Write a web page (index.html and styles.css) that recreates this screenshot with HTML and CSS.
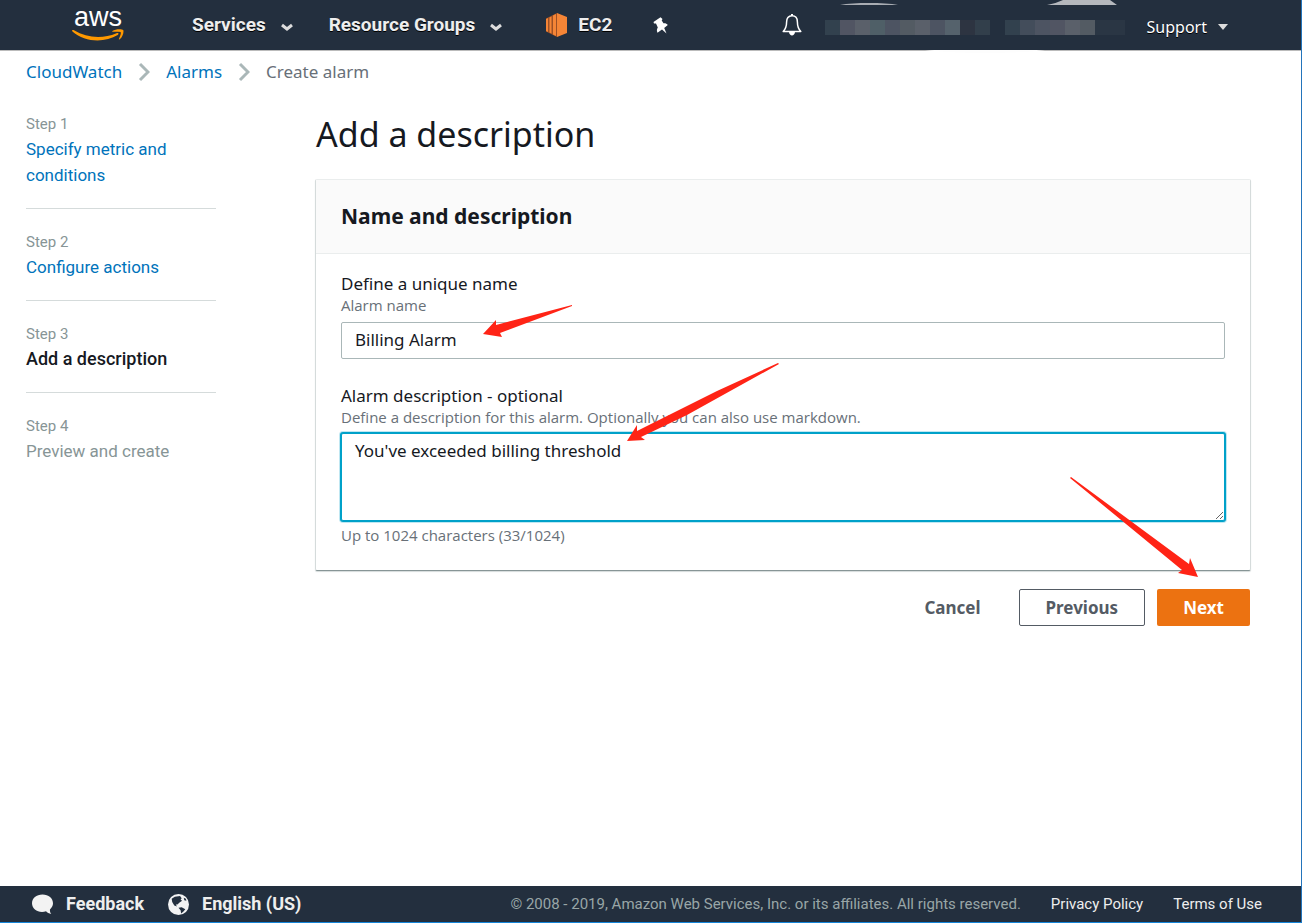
FILE: index.html
```html
<!DOCTYPE html>
<html lang="en">
<head>
<meta charset="utf-8">
<title>Create alarm - CloudWatch</title>
<link rel="stylesheet" href="styles.css">
</head>
<body>
<header class="topbar">
  <a class="logo" href="#" aria-label="aws home">
    <span class="logo-word">aws</span>
    <svg class="logo-smile" viewBox="0 0 52 13" aria-hidden="true">
      <path d="M0 1.500C.6.700 1.400.900 2 1.300c13 7.700 28.500 8.800 42.500 2.900 1.900-.8 2.800.8 1.200 1.800C32.800 14 12.500 13.300.7 2.700.2 2.300 0 1.900 0 1.500z"/>
      <path d="M40.500 1.900c3-2.200 9.600-2.200 10.700-.8.900 1.500-.4 7-3.500 9.200-.6.400-1 .1-.7-.5.900-2.100 2.300-5.500 1.700-6.500-.8-.9-4.800-.7-7.600-.5-.9.100-1.200-.4-.6-.9z"/>
    </svg>
  </a>
  <nav class="nav">
    <button class="nav-item nav-services" type="button">Services
      <svg class="chev" viewBox="0 0 12 8" aria-hidden="true"><path d="M1 2l5 4 5-4"/></svg>
    </button>
    <button class="nav-item nav-groups" type="button">Resource Groups
      <svg class="chev" viewBox="0 0 12 8" aria-hidden="true"><path d="M1 2l5 4 5-4"/></svg>
    </button>
    <a class="nav-item nav-ec2" href="#">
      <svg class="ec2" viewBox="0 0 22 24" aria-hidden="true">
        <path fill="#9d5025" d="M0 5.500L11 0v24L0 18.500z"/>
        <path fill="#f58536" d="M11 0l10 4v16l-10 4zM0 6l2-1v14l-2-1zM3.500 4.500l2-1v17l-2-1zM7 2.500l3-1.500v22l-3-1.500z"/>
      </svg>EC2
    </a>
    <button class="pin" type="button" aria-label="Pin shortcuts">
      <svg viewBox="0 0 15 17" aria-hidden="true"><path fill="#fff" d="M.5 5L7.500 .3 9.500 2l-.8 1.500L10.500 6.200c2-.2 3.300.4 4.300 1.800L11.200 11l2.300 5.500-4.500-4L4.500 15.800c-1-2-.7-3.800.3-5.300L3 6.500h-2z"/></svg>
    </button>
  </nav>
  <div class="account">
    <button class="bell" type="button" aria-label="Notifications">
      <svg viewBox="0 0 20 22" aria-hidden="true">
        <path fill="none" stroke="#fff" stroke-width="1.500" stroke-linejoin="round" d="M10 1.800c-3.700 0-5.400 2.700-5.400 6.200 0 5-1 7-3.400 9.500h17.600c-2.400-2.500-3.400-4.500-3.400-9.500 0-3.500-1.700-6.200-5.400-6.200z"/>
        <path fill="#fff" d="M9 0h2v2H9zM7 18h6c-.3 4.500-5.700 4.500-6 0z"/>
      </svg>
    </button>
    <span class="masked masked-user">
      <svg class="sliver sliver-user" viewBox="0 0 58 2" aria-hidden="true"><path fill="#a9adb3" d="M0 2c14-2.600 44-2.600 58 0z"/></svg>
      <svg class="sliver sliver-tab" viewBox="0 0 120 3" aria-hidden="true"><path fill="#fdfdfd" d="M0 0h120c-30 4-90 4-120 0z"/></svg>
      <i class="c1"></i><i class="c2"></i><i class="c3"></i><i class="c4"></i><i class="c5"></i><i class="c6"></i><i class="c3"></i><i class="c5"></i><i class="c7"></i><i class="c8"></i><i class="c9"></i>
    </span>
    <span class="masked masked-region">
      <svg class="sliver sliver-region" viewBox="0 0 70 5" aria-hidden="true"><path fill="#b5b8bd" d="M0 5c6-1 11-3 16-5h47l7 5z"/></svg>
      <i class="c1"></i><i class="c10"></i><i class="c5"></i><i class="c2"></i><i class="c3"></i><i class="c6"></i><i class="c11"></i><i class="c11"></i>
    </span>
    <button class="support" type="button">Support
      <svg viewBox="0 0 10 6" aria-hidden="true"><path fill="#ddd" d="M0 0h10L5 6z"/></svg>
    </button>
  </div>
</header>

<nav class="crumbs" aria-label="Breadcrumb">
  <a href="#">CloudWatch</a>
  <svg viewBox="0 0 12 20" aria-hidden="true"><path d="M2 2l8 8-8 8"/></svg>
  <a href="#">Alarms</a>
  <svg viewBox="0 0 12 20" aria-hidden="true"><path d="M2 2l8 8-8 8"/></svg>
  <span>Create alarm</span>
</nav>

<div class="layout">
  <ol class="steps">
    <li><small>Step 1</small><a href="#">Specify metric and conditions</a></li>
    <li><small>Step 2</small><a href="#">Configure actions</a></li>
    <li><small>Step 3</small><strong>Add a description</strong></li>
    <li><small>Step 4</small><span>Preview and create</span></li>
  </ol>
  <main>
    <h1>Add a description</h1>
    <form>
      <section class="panel">
        <h2>Name and description</h2>
        <div class="fields">
          <div class="field">
            <label for="name">Define a unique name</label>
            <p class="hint">Alarm name</p>
            <input id="name" type="text" value="Billing Alarm">
            <svg class="arrow arrow-name" viewBox="0 0 90 34" aria-hidden="true"><path d="M89 1v1L17 29l2 4L0 30 13 16v5z"/></svg>
          </div>
          <div class="field">
            <label for="desc">Alarm description - optional</label>
            <p class="hint">Define a description for this alarm. Optionally you can also use markdown.</p>
            <textarea id="desc" spellcheck="false">You've exceeded billing threshold</textarea>
            <p class="hint count">Up to 1024 characters (33/1024)</p>
            <svg class="arrow arrow-desc" viewBox="0 0 152 78" aria-hidden="true"><path d="M151 0l1 1L60 52 14 74l4 3-18 1L10 62v6L90 28z"/></svg>
          </div>
        </div>
      </section>
      <div class="actions">
        <button class="btn cancel" type="button">Cancel</button>
        <button class="btn previous" type="button">Previous</button>
        <button class="btn next" type="submit">Next</button>
        <svg class="arrow arrow-next" viewBox="0 0 128 101" aria-hidden="true"><path d="M0 1l1-1 118 87 1-6 8 19-20-4 4-3z"/></svg>
      </div>
    </form>
  </main>
</div>

<footer class="footer">
  <a class="foot-main" href="#">
    <svg viewBox="0 0 22 21" aria-hidden="true"><path fill="#f3f3f3" d="M11 0C4.500 0 0 4 0 9.300s4.700 9 10.500 9c1.500 0 2.900-.2 4.200-.6 1.300 1.500 3 2.500 5.500 2.800-1.200-1.500-1.500-3-1.400-4.800C20.800 14 22 11.800 22 9.300 22 4 17.500 0 11 0z"/></svg>Feedback
  </a>
  <button class="foot-main" type="button">
    <svg viewBox="0 0 20 20" aria-hidden="true"><circle cx="10" cy="10" r="10" fill="#f3f3f3"/><path fill="#232f3e" d="M3.500 4.500l3-2 5-.5 1.500 2-1 1.500 1.500 1-2.500 1.500L9 10l-1.500 0 1 2-2.500-1L4 7.500zM15 3.500l2 1 .5 2-2-.5zM10 13l3-.5 3.500 2-2 2.500-2 1.500-.5-3z"/></svg>English (US)
  </button>
  <div class="legal">
    <span>© 2008 - 2019, Amazon Web Services, Inc. or its affiliates. All rights reserved.</span>
    <a href="#">Privacy Policy</a>
    <a href="#">Terms of Use</a>
  </div>
</footer>
</body>
</html>
```
FILE: styles.css
```css
* { box-sizing: border-box; }
body {
  margin: 0;
  min-height: 100vh;
  display: flex;
  flex-direction: column;
  border-right: 1px solid #2374bb;
  border-bottom: 1px solid #1686d9;
  background: #fff;
  color: #16191f;
  font: 17px/22px "Noto Sans", sans-serif;
}
button { padding: 0; border: 0; background: none; color: inherit; font: inherit; cursor: pointer; }
a { color: #0073bb; text-decoration: none; }
svg { display: block; flex: none; }
h1, h2, p { margin: 0; }

.topbar {
  display: flex;
  align-items: center;
  height: 50px;
  padding-left: 72px;
  background: #232f3e;
  color: #fff;
  box-shadow: 0 1px 0 #bbb;
}
.logo { width: 52px; padding-bottom: 4px; color: #fff; }
.logo-word { display: block; font: 27px/24px "Liberation Sans", sans-serif; text-align: center; }
.logo-smile { width: 52px; height: 13px; fill: #f90; }
.nav { display: flex; align-items: center; margin-left: 68px; }
.nav-item {
  display: flex;
  align-items: center;
  color: #eee;
  font: 700 19px/24px Roboto, sans-serif;
  text-shadow: 0 1px 0 #000;
}
.nav-services { gap: 15px; }
.nav-groups { margin-left: 36px; gap: 15px; }
.nav-ec2 { margin-left: 44px; gap: 10px; }
.chev { width: 12px; height: 8px; fill: none; stroke: #ddd; stroke-width: 3; margin-top: 3px; }
.ec2 { width: 22px; height: 24px; }
.pin { margin-left: 41px; }
.pin svg { width: 15px; height: 17px; }
.account { display: flex; align-items: center; margin-left: auto; padding-right: 73px; }
.bell svg { width: 20px; height: 22px; }
.masked { position: relative; display: flex; height: 15px; margin-top: 5px; }
.masked-user { margin-left: 23px; }
.masked-region { margin-left: 15px; }
.masked i { width: 15px; height: 15px; }
.sliver { position: absolute; }
.sliver-user { left: 15px; top: -17px; width: 58px; height: 2px; }
.sliver-tab { left: 100px; top: 30px; width: 120px; height: 3px; }
.sliver-region { left: 42px; top: -20px; width: 70px; height: 5px; }
.c1 { background: #32414e; }
.c2 { background: #515563; }
.c3 { background: #5a606a; }
.c4 { background: #4f5f67; }
.c5 { background: #4d5462; }
.c6 { background: #535b63; }
.c7 { background: #55626c; }
.c8 { background: #2d3441; }
.c9 { background: #323f4b; }
.c10 { background: #434d5b; }
.c11 { background: #2a3644; }
.support { display: flex; align-items: center; gap: 11px; margin: 4px 0 0 22px; font-size: 16px; text-shadow: 0 1px 0 #000; }
.support svg { width: 10px; height: 6px; }

.crumbs { display: flex; align-items: center; gap: 16px; padding: 11px 26px 0; color: #687078; }
.crumbs svg { width: 12px; height: 20px; fill: none; stroke: #aab7b8; stroke-width: 3; }

.layout {
  display: grid;
  grid-template-columns: 190px minmax(0, 1fr);
  gap: 99px;
  flex: 1;
  padding: 30px 50px 30px 26px;
}
.steps { margin: 0; padding: 0; list-style: none; color: #879596; font: 17px/26px Roboto, sans-serif; }
.steps li { padding: 22px 0 20px; border-bottom: 1px solid #d5dbdb; }
.steps li:first-child { padding-top: 0; }
.steps li:last-child { border-bottom: 0; }
.steps small { display: block; margin-bottom: 1px; font-size: 15px; line-height: 22px; }
.steps a, .steps strong, .steps span { display: block; }
.steps strong { color: #16191f; font-size: 18px; font-weight: 500; }

h1 { padding-left: 1px; font-size: 34px; line-height: 42px; font-weight: 400; }
.panel {
  margin-top: 24px;
  border: 1px solid #d5dbdb;
  border-top-color: #eaeded;
  border-bottom-color: #879596;
  border-radius: 2px;
  box-shadow: 0 1px 1px #d5dbdb;
}
h2 { padding: 22px 25px 23px; border-bottom: 1px solid #eaeded; background: #fafafa; font-size: 21px; line-height: 28px; font-weight: 700; }
.fields { display: grid; gap: 26px; padding: 19px 25px 23px; }
.field { position: relative; }
.field label { display: block; }
.hint { color: #687078; font: 15px/20px "Open Sans", sans-serif; }
.field input, .field textarea {
  display: block;
  width: 100%;
  margin-top: 7px;
  padding: 6px 13px 8px;
  border: 1px solid #aab7b8;
  border-radius: 2px;
  background: #fff;
  color: #16191f;
  font: inherit;
}
.field input { height: 37px; }
.field textarea {
  height: 88px;
  margin-top: 6px;
  border-color: #00a1c9;
  box-shadow: 0 0 0 1px #00a1c9, 0 0 0 2px #bfe7f2;
  outline: 0;
}
.count { margin: 4px 0 2px; }
.actions { position: relative; display: flex; justify-content: flex-end; gap: 12px; margin-top: 18px; padding-right: 1px; }
.btn { height: 37px; padding: 0 26px; border-radius: 2px; color: #545b64; font-weight: 700; }
.previous { border: 1px solid #545b64; }
.next { background: #ec7211; color: #fff; }
.arrow { position: absolute; fill: #ff2416; pointer-events: none; }
.arrow-name { left: 142px; top: 31px; width: 90px; height: 34px; }
.arrow-desc { left: 286px; top: -22px; width: 152px; height: 78px; }
.arrow-next { right: 53px; top: -112px; width: 128px; height: 101px; }

.footer {
  display: flex;
  align-items: center;
  gap: 24px;
  height: 36px;
  padding: 0 39px 0 32px;
  background: #232f3e;
  color: #eee;
  font: 15px/22px Roboto, sans-serif;
}
.footer a { color: #eee; }
.foot-main { display: flex; align-items: center; gap: 13px; font-size: 18px; font-weight: 700; }
.foot-main svg { width: 21px; height: 21px; }
.legal { display: flex; gap: 30px; margin-left: auto; color: #99a6a7; }
```
